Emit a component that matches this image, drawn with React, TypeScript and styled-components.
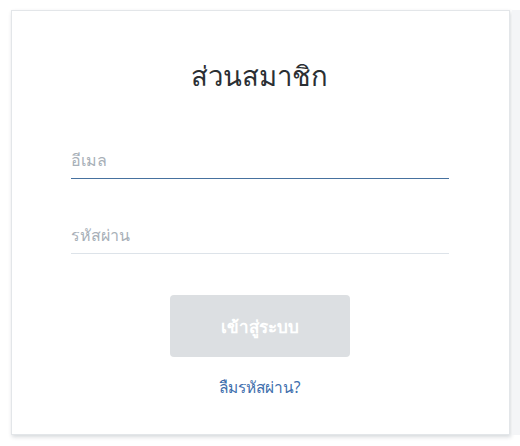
import React from 'react';
import styled, { createGlobalStyle } from 'styled-components';

const GlobalStyle = createGlobalStyle`
  html, body {
    margin: 0;
    padding: 0;
    background: #ffffff;
    font-family: "Noto Sans", Tahoma, "DejaVu Sans", sans-serif;
  }
`;

const Page = styled.div`
  display: flex;
  align-items: flex-start;
  padding: 10px 0 0 11px;
  height: 446px;
  box-sizing: border-box;
`;

const Card = styled.div`
  width: 499px;
  height: 425px;
  box-sizing: border-box;
  background: #fff;
  border: 1px solid #e3e6e9;
  box-shadow: 1px 2px 4px rgba(30, 45, 60, 0.18);
  display: flex;
  flex-direction: column;
  align-items: center;
  padding: 47px 60px 0 58px;
`;

const Strip = styled.div`
  width: 8px;
  height: 425px;
  margin-left: 2px;
  background: #f4f5f7;
`;

const Title = styled.h1`
  margin: 0 0 48px;
  font-size: 27.5px;
  font-weight: 500;
  color: #2b2f33;
  line-height: 36px;
`;

const Field = styled.div<{ $active?: boolean }>`
  width: 378px;
  height: 36px;
  display: flex;
  align-items: center;
  border-bottom: ${(p) => (p.$active ? '1.5px solid #46719f' : '1px solid #dde3e9')};
  margin-bottom: ${(p) => (p.$active ? '38px' : '41px')};
  font-size: 16px;
  font-weight: 500;
  color: #a8b0b8;
`;

const Button = styled.button`
  width: 180px;
  height: 62px;
  border: none;
  border-radius: 4px;
  background: #dcdfe2;
  color: #ffffff;
  font-family: inherit;
  font-size: 17px;
  font-weight: 600;
`;

const Link = styled.a`
  margin-top: 18px;
  font-size: 15.5px;
  color: #3f6fad;
  text-decoration: none;
`;

export default function App() {
  return (
    <>
      <GlobalStyle />
      <Page>
        <Card>
          <Title>ส่วนสมาชิก</Title>
          <Field $active>อีเมล</Field>
          <Field>รหัสผ่าน</Field>
          <Button>เข้าสู่ระบบ</Button>
          <Link href="#">ลืมรหัสผ่าน?</Link>
        </Card>
        <Strip />
      </Page>
    </>
  );
}
